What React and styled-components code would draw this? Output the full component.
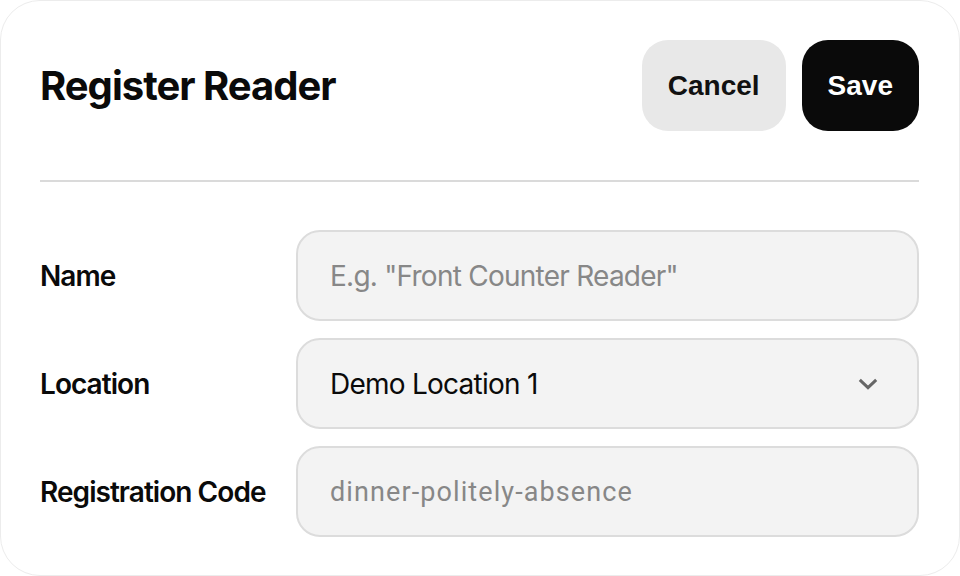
import React from 'react';
import styled, { createGlobalStyle } from 'styled-components';

const GlobalStyle = createGlobalStyle`
  html, body {
    margin: 0;
    padding: 0;
    background: #ffffff;
  }
  * {
    box-sizing: border-box;
  }
`;

const fields = [
  { label: 'Name', value: 'E.g. "Front Counter Reader"', tone: 'placeholder' },
  { label: 'Location', value: 'Demo Location 1', tone: 'value', select: true },
  { label: 'Registration Code', value: 'dinner-politely-absence', tone: 'code' },
];

const Chevron = () => (
  <svg width="20" height="12" viewBox="0 0 20 12" fill="none">
    <path d="M1.8 1.8 10 9.6 18.2 1.8" stroke="#666" strokeWidth="3" />
  </svg>
);

const App = () => {
  return (
    <>
      <GlobalStyle />
      <Card>
        <Header>
          <Title>Register Reader</Title>
          <Actions>
            <Button>Cancel</Button>
            <Button primary>Save</Button>
          </Actions>
        </Header>
        <Divider />
        <Form>
          {fields.map(f => (
            <Row key={f.label}>
              <Label>{f.label}</Label>
              <Field>
                <FieldText tone={f.tone}>{f.value}</FieldText>
                {f.select && <Chevron />}
              </Field>
            </Row>
          ))}
        </Form>
      </Card>
    </>
  );
};

export default App;

const Card = styled.div`
  width: 960px;
  height: 576px;
  padding: 39px 39px 0 39px;
  border: 1px solid #ececec;
  border-radius: 40px;
  background: #ffffff;
  font-family: Inter, 'Liberation Sans', sans-serif;
  color: #0a0a0a;
`;

const Header = styled.div`
  display: flex;
  align-items: center;
  justify-content: space-between;
  height: 91px;
`;

const Title = styled.h1`
  margin: 0;
  font-size: 40px;
  font-weight: 700;
  letter-spacing: -1px;
`;

const Actions = styled.div`
  display: flex;
  gap: 16px;
  margin-right: 1px;
`;

const Button = styled.button`
  height: 91px;
  padding: 0 26px;
  border: none;
  border-radius: 26px;
  font-family: 'Liberation Sans', Arial, sans-serif;
  font-size: 28px;
  font-weight: 700;
  background: ${props => (props.primary ? '#0a0a0a' : '#e8e8e8')};
  color: ${props => (props.primary ? '#ffffff' : '#111111')};
`;

const Divider = styled.hr`
  margin: 49px 1px 0 0;
  border: none;
  height: 2px;
  background: #dadada;
`;

const Form = styled.div`
  display: flex;
  flex-direction: column;
  gap: 17px;
  margin-top: 48px;
  margin-right: 1px;
`;

const Row = styled.div`
  display: grid;
  grid-template-columns: 256px 1fr;
  align-items: center;
`;

const Label = styled.span`
  font-size: 28px;
  font-weight: 600;
  letter-spacing: -0.95px;
  color: #0a0a0a;
`;

const Field = styled.div`
  display: flex;
  align-items: center;
  justify-content: space-between;
  height: 91px;
  padding: 0 39px 0 32px;
  background: #f3f3f3;
  border: 2px solid #dcdcdc;
  border-radius: 24px;
`;

const FieldText = styled.span`
  font-size: ${props => (props.tone === 'code' ? '27px' : '28px')};
  font-weight: 400;
  letter-spacing: ${props => (props.tone === 'code' ? '1.1px' : '-0.75px')};
  font-family: ${props =>
    props.tone === 'code' ? "Roboto, 'Liberation Sans', sans-serif" : "Inter, 'Liberation Sans', sans-serif"};
  color: ${props => (props.tone === 'value' ? '#0a0a0a' : '#878787')};
`;
